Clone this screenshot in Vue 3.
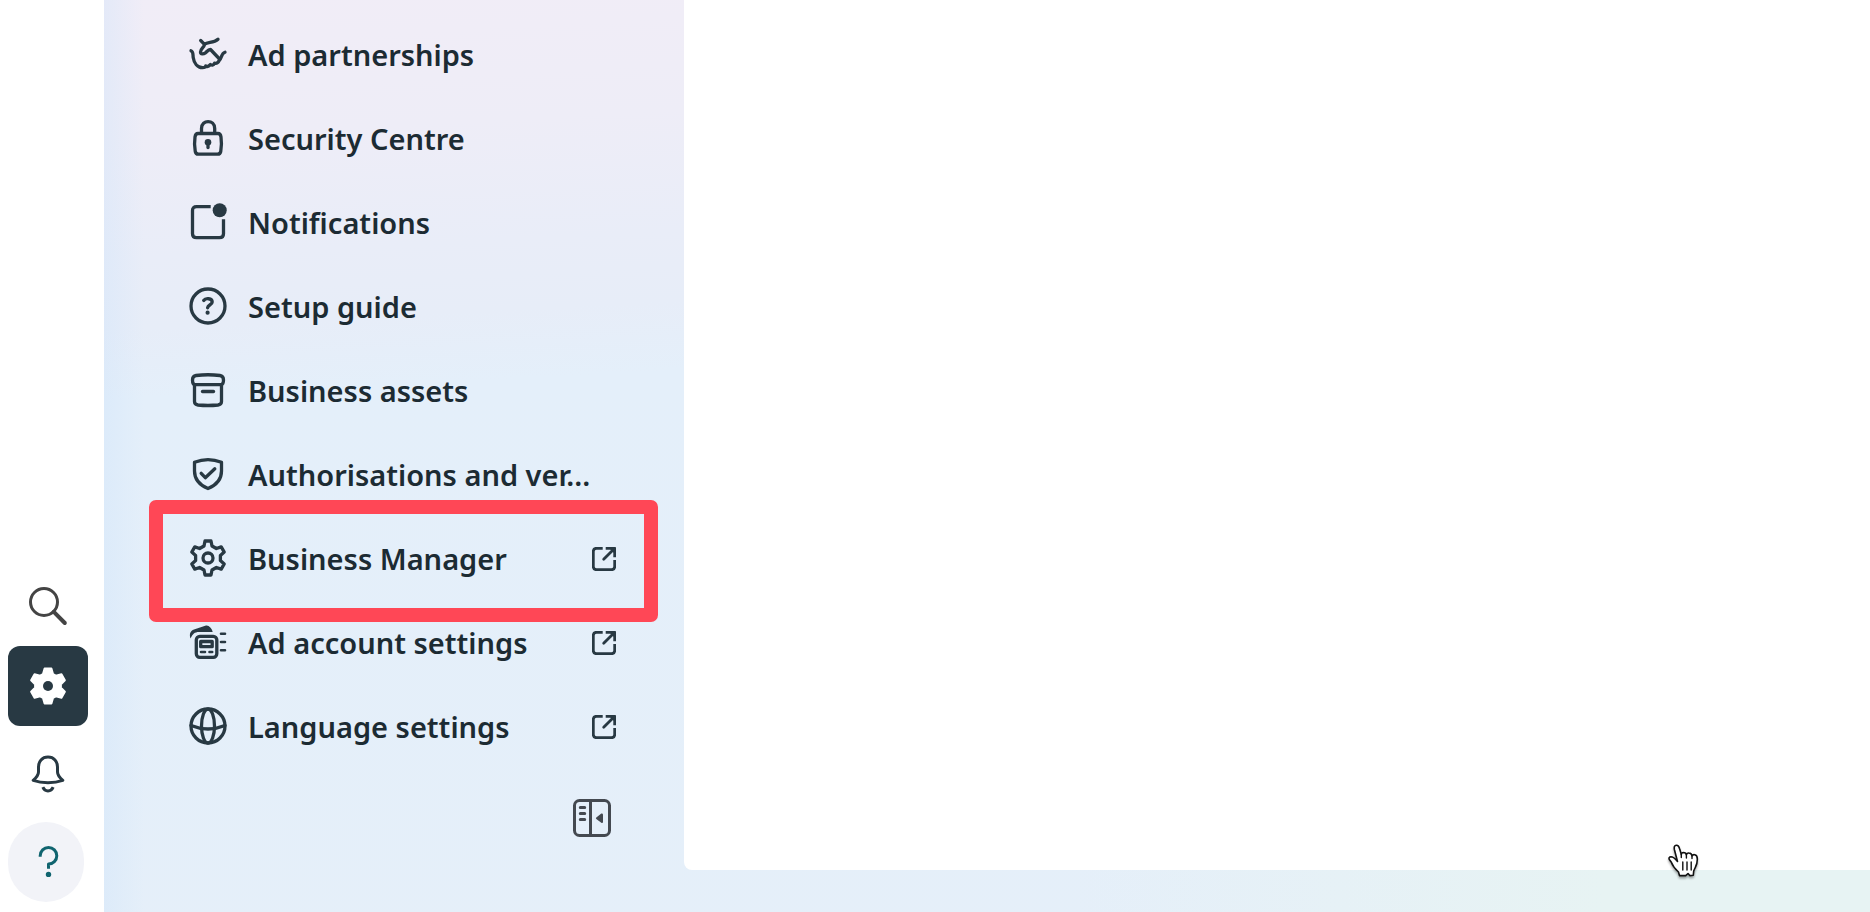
<script setup>
const items = [
  { label: 'Ad partnerships', icon: 'handshake' },
  { label: 'Security Centre', icon: 'lock' },
  { label: 'Notifications', icon: 'notification' },
  { label: 'Setup guide', icon: 'guide' },
  { label: 'Business assets', icon: 'archive' },
  { label: 'Authorisations and ver…', icon: 'shield' },
  { label: 'Business Manager', icon: 'gear', external: true, highlighted: true },
  { label: 'Ad account settings', icon: 'account', external: true },
  { label: 'Language settings', icon: 'globe', external: true },
]

// Six-toothed cog outline around (cx, cy)
function cog(cx, cy, outer, inner, top, base) {
  const tooth = [[-base, -inner], [-top, -outer], [top, -outer], [base, -inner]]
  const points = []
  for (let i = 0; i < 6; i++) {
    const a = (i * Math.PI) / 3
    for (const [x, y] of tooth) {
      points.push(`${(cx + x * Math.cos(a) - y * Math.sin(a)).toFixed(2)} ${(cy + x * Math.sin(a) + y * Math.cos(a)).toFixed(2)}`)
    }
  }
  return `M${points.join('L')}Z`
}
const cogLine = cog(20, 19, 17, 12, 3, 4)
const cogSolid = cog(20, 20, 17.5, 12, 3.4, 5)
</script>

<template>
  <div class="page">
    <aside class="rail">
      <button class="rail-button search" aria-label="Search">
        <svg class="icon" viewBox="0 0 40 40">
          <circle cx="16" cy="16" r="13.5" />
          <path d="M25.8 25.8L36.8 37" stroke-width="4" />
        </svg>
      </button>
      <button class="rail-button active" aria-label="Settings">
        <svg class="icon" viewBox="0 0 40 40">
          <path :d="cogSolid" fill="currentColor" stroke-width="2" />
          <circle class="cog-hole" cx="20" cy="20" r="5" />
        </svg>
      </button>
      <button class="rail-button" aria-label="Notifications">
        <svg class="icon" viewBox="0 0 40 40">
          <path d="M20 3C14 3 10.5 7.500 10.500 13V18C10.500 21 8.500 23.500 5.200 26.300C14 29.500 26 29.500 34.800 26.300C31.500 23.500 29.500 21 29.500 18V13C29.500 7.500 26 3 20 3Z" />
          <path d="M14.800 33.200C17 38.200 23 38.200 25.200 33.200" stroke-linecap="butt" />
        </svg>
      </button>
      <button class="rail-button help" aria-label="Help">
        <svg class="icon" viewBox="0 0 40 40">
          <path d="M14.200 14.800V13.700A8.300 8.300 0 1 1 22.500 22V26.800" stroke-linecap="butt" />
          <circle cx="22.500" cy="32.400" r="2.700" fill="currentColor" stroke="none" />
        </svg>
      </button>
    </aside>

    <div class="shell">
      <nav class="sidebar" aria-label="Settings">
        <ul class="menu">
          <li v-for="item in items" :key="item.label" class="row">
            <a href="#" class="link">
              <svg class="icon" viewBox="0 0 40 40" aria-hidden="true">
                <g v-if="item.icon === 'handshake'">
                  <path d="M12.700 5.500L16.500 9.300C20 6.500 25.500 8.500 30 4.200" />
                  <path d="M16.500 9.300C16.200 12.500 12.500 13.500 12.500 17C12.500 19.500 15.500 19.200 17.500 17.800C19 16.500 20.200 14.500 22.500 14.500L31.500 24" />
                  <path d="M3 15.800C5.500 16.500 4.800 19.500 5.200 22.500C6 28 9.500 32.500 14.500 32.700Q17.500 32.700 17.800 30.800Q19.500 32.700 22.500 29.500Q25 31.200 26.500 28.200Q29.500 29 31.200 25.500C34 23 33 18.500 37 17.200" />
                </g>
                <g v-else-if="item.icon === 'lock'">
                  <path d="M10 14.500H30Q32.500 14.500 33 18Q34 25 32.800 32Q32.500 35.200 29.500 35.200H10.500Q7.500 35.200 7.200 32Q6 25 7 18Q7.500 14.500 10 14.500Z" />
                  <path d="M13.500 14V9.500C13.500 .3 26.700 .3 26.700 9.500V14" />
                  <circle cx="20" cy="23.300" r="3.300" fill="currentColor" stroke="none" />
                  <path d="M20 24V28.500" />
                </g>
                <g v-else-if="item.icon === 'notification'">
                  <path d="M22.700 3.700H8.500Q4.500 3.700 4.500 7.500V30.800Q4.500 34.700 8.500 34.700H31.500Q35.500 34.700 35.500 30.800V16.300" stroke-linecap="butt" />
                  <circle cx="31.700" cy="7.300" r="7" fill="currentColor" stroke="none" />
                </g>
                <g v-else-if="item.icon === 'guide'">
                  <circle cx="20" cy="19" r="17" />
                  <path d="M15.700 13.500C17.500 10.800 24.200 11 24.200 15C24.200 18 20 17.500 19.600 20.800" />
                  <circle cx="19.600" cy="25.700" r="2.100" fill="currentColor" stroke="none" />
                </g>
                <g v-else-if="item.icon === 'archive'">
                  <path d="M8 4.500Q20 3 32 4.500Q35.500 5 35.500 9Q35.500 13.700 33 13.700H7Q4.500 13.700 4.500 9Q4.500 5 8 4.500Z" />
                  <path d="M6.500 13.700V30.500Q6.500 33.500 10 34Q20 35 30 34Q33.500 33.500 33.500 30.500V13.700" />
                  <path d="M14.500 20.500H25.500" />
                </g>
                <g v-else-if="item.icon === 'shield'">
                  <path d="M6.500 7.300Q20 1.800 33.500 7.300V16Q33.500 28 20 33.500Q6.500 28 6.500 16Z" />
                  <path d="M13.200 18.300L17.300 22.700L26.800 13.800" />
                </g>
                <g v-else-if="item.icon === 'gear'">
                  <path :d="cogLine" />
                  <circle cx="20" cy="19" r="5" />
                </g>
                <g v-else-if="item.icon === 'account'">
                  <path d="M2.500 15.500C1 10.500 2.500 8 6 6.500L18 2.500C20.500 1.800 24 5 24.700 9H11C6.500 9 4.800 11 2.500 15.500Z" fill="currentColor" stroke="none" />
                  <rect x="8.300" y="13.300" width="20.500" height="21" rx="3.500" />
                  <rect x="12.700" y="18.500" width="11.500" height="5.200" />
                  <path d="M13 29H17M21.500 29H24.200M33 10.700H37M33 19H37M33 27.300H37" stroke-width="2.600" />
                </g>
                <g v-else>
                  <circle cx="20" cy="19" r="17" />
                  <ellipse cx="20" cy="19" rx="6.500" ry="17" />
                  <path d="M3 18.500Q20 25.500 37 18.500" />
                </g>
              </svg>
              <span class="label">{{ item.label }}</span>
              <svg v-if="item.external" class="external" viewBox="0 0 24 24" aria-hidden="true">
                <path d="M10.700 1.300H4.500Q1.300 1.300 1.300 4.500V19.500Q1.300 22.700 4.500 22.700H19.500Q22.700 22.700 22.700 19.500V13" />
                <path d="M13.700 1.300H22.700V10.300" />
                <path d="M21.500 2.500L11.700 12.300" stroke-linecap="round" />
                <path d="M17 1H23V7Z" fill="currentColor" stroke="none" />
              </svg>
            </a>
            <span v-if="item.highlighted" class="highlight"></span>
          </li>
        </ul>
        <button class="collapse" aria-label="Collapse menu">
          <svg viewBox="0 0 38 38">
            <rect x="1.500" y="1.500" width="35" height="35" rx="5" />
            <path d="M17.500 1.500V36.500" />
            <path d="M7.300 8.400H11.700M7.300 14.400H11.700M7.300 20.400H11.700" stroke-linecap="round" />
            <path d="M30 15.200V23.300Q29.500 24.500 28.300 23.800L23.300 20Q22.500 19.200 23.300 18.400L28.300 14.600Q29.500 14 30 15.200Z" fill="currentColor" stroke="none" />
          </svg>
        </button>
      </nav>
      <main class="content"></main>
    </div>

    <svg class="pointer" viewBox="0 0 32 36" aria-hidden="true">
      <path d="M9.500 17.500L6.500 6Q5.500 1.500 8.300 1.200Q10.700 1 11.700 5L13.300 10.500Q13.500 8.500 15.500 8.500Q18 8.600 18.400 10.800Q19 8.800 21 9Q23.700 9.200 24 12Q24.700 10.300 26.800 10.700Q29.500 11.300 29.300 15.500Q29.200 20 27.500 23L25.700 27L25.300 31.300L21.800 31.600L20 29.500L17.700 31.600H11.500L10.500 28Q5 23 3.200 18L1.300 15.500Q.3 13 3 12.800Q5.500 12.800 9.500 17.500Z" />
      <path d="M14.800 18V26M19 18V26M23.200 18V26" stroke-width="1.400" />
      <path d="M13.300 10.500V13.500M18.400 10.800V14M24 12V14.500" stroke-width="1.400" />
    </svg>
  </div>
</template>

<style>
body {
  margin: 0;
}
</style>

<style scoped>
.page {
  position: relative;
  display: flex;
  min-height: 100vh;
  overflow: hidden;
  background: #fff;
  color: #1c2b33;
  font-family: "Noto Sans", "Open Sans", sans-serif;
}

svg {
  flex: none;
  fill: none;
  stroke: currentColor;
  stroke-width: 3;
  stroke-linecap: round;
  stroke-linejoin: round;
}

button {
  display: flex;
  align-items: center;
  justify-content: center;
  padding: 0;
  border: 0;
  background: none;
  color: inherit;
  cursor: pointer;
}

.icon {
  width: 40px;
  height: 40px;
  color: #283943;
}

.rail {
  box-sizing: border-box;
  display: flex;
  flex: none;
  flex-direction: column;
  justify-content: flex-end;
  gap: 8px;
  width: 104px;
  padding: 0 8px 10px;
}

.rail-button {
  width: 80px;
  height: 80px;
}

.search {
  height: 64px;
}

.search .icon {
  color: #444;
}

.active {
  border-radius: 12px;
  background: #283943;
}

.active .icon {
  color: #fff;
}

.cog-hole {
  fill: #283943;
  stroke: none;
}

.help {
  width: 76px;
  border-radius: 38px;
  background: #f2f3f8;
}

.help .icon {
  color: #10646f;
}

.shell {
  display: flex;
  flex: 1;
  min-width: 0;
  background:
    linear-gradient(90deg, rgba(208, 228, 250, 0.4), transparent 40px),
    linear-gradient(90deg, rgba(231, 243, 243, 0) 55%, #e7f3f3 85%),
    linear-gradient(177deg, #f1edf7 0, #eeedf7 140px, #e9edf8 260px, #e7edf8 330px, #e4effa 400px, #e5eff9 100%);
}

.sidebar {
  box-sizing: border-box;
  display: flex;
  flex: none;
  flex-direction: column;
  align-items: flex-end;
  width: 580px;
  padding: 13px 68px 74px 84px;
}

.menu {
  align-self: stretch;
  margin: 0;
  padding: 0;
  list-style: none;
}

.row {
  position: relative;
}

.link {
  display: flex;
  align-items: center;
  height: 84px;
  color: inherit;
  text-decoration: none;
}

.link .icon {
  stroke-width: 3.3;
}

.label {
  flex: 1;
  min-width: 0;
  margin: 0 12px 0 20px;
  font-size: 29px;
  font-weight: 600;
  line-height: 40px;
  white-space: nowrap;
}

.external {
  width: 24px;
  height: 24px;
  color: #283943;
  stroke-width: 2.8;
  stroke-linecap: butt;
}

.highlight {
  position: absolute;
  inset: -17px -42px -21px -39px;
  z-index: 1;
  box-sizing: border-box;
  border: 14px solid #ff4756;
  border-radius: 7px;
  pointer-events: none;
}

.collapse {
  width: 38px;
  height: 38px;
  margin: 30px 5px 0 0;
  color: #444950;
}

.collapse svg {
  width: 38px;
  height: 38px;
}

.content {
  flex: 1;
  min-width: 0;
  margin-bottom: 42px;
  border-bottom-left-radius: 8px;
  background: #fff;
}

.pointer {
  position: absolute;
  right: 170px;
  bottom: 32px;
  width: 32px;
  height: 36px;
  color: #111;
  stroke-width: 1.6;
  filter: drop-shadow(0 2px 1px rgba(0, 0, 0, 0.35));
}

.pointer path:first-child {
  fill: #fff;
}
</style>
